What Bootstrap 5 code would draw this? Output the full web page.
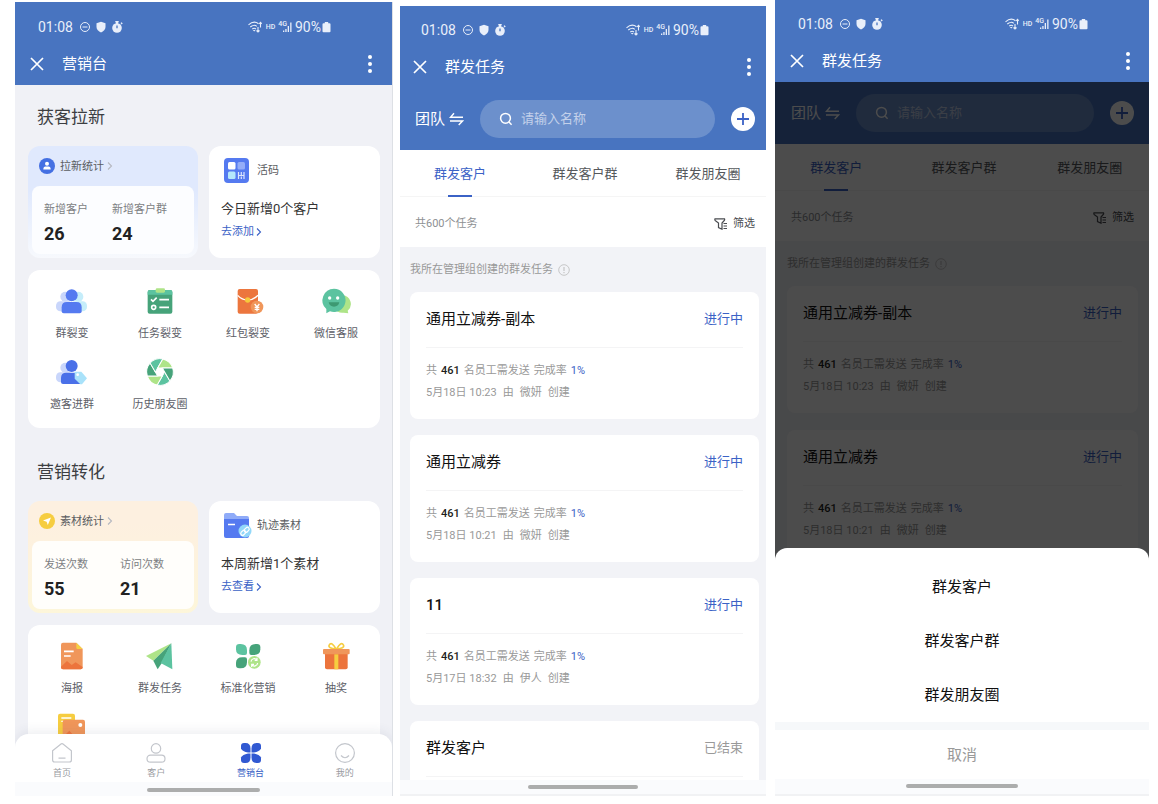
<!DOCTYPE html>
<html lang="zh-CN">
<head>
<meta charset="utf-8">
<meta name="viewport" content="width=device-width, initial-scale=1">
<title>营销台</title>
<link href="https://cdn.jsdelivr.net/npm/bootstrap@5.3.0/dist/css/bootstrap.min.css" rel="stylesheet">
<style>
  :root { --brand: #4874c0; --link: #3b62c6; --ink: #333539; --mute: #999; --page: #f0f1f6; }
  body { font-family: Roboto, "Noto Sans CJK SC", sans-serif; color: var(--ink); font-size: 11px; line-height: 16px; background: #fff; }
  button { font: inherit; }
  svg { display: block; flex: none; }
  .board { display: grid; grid-template-columns: 377fr 366fr 375fr; gap: 8px; height: 100vh; padding: 0 9px 8px 15px; }
  .phone { display: flex; flex-direction: column; position: relative; min-height: 0; min-width: 0; overflow: hidden; background: var(--page); }
  .phone-home { margin-top: 2px; box-shadow: 1px 0 #dde0e5; --pl: 15px; --pr: 20px; --top: 13px; --sl: 23px; --sr: 61px; }
  .phone-list { margin-top: 6px; --pl: 13px; --pr: 15px; --top: 12px; --sl: 21px; --sr: 57px; --rowl: 15px; --rowr: 11px; --el: 10px; --er: 7px; --gap: 16px; }
  .phone-sheet { margin-left: 1px; --pl: 15px; --pr: 19px; --top: 12px; --sl: 23px; --sr: 61px; --rowl: 16px; --rowr: 15px; --el: 12px; --er: 11px; --gap: 17px; }
  .plain { border: 0; background: none; padding: 0; color: inherit; }

  .topbar { background: var(--brand); color: #fff; padding-top: var(--top); flex: none; }
  .status { height: 24px; padding: 0 var(--sr) 0 var(--sl); font-size: 14px; line-height: 24px; color: #e9effa; }
  .status .marks { margin: 0 auto 0 6px; }
  .status .tiny { font-size: 7px; line-height: 8px; font-weight: 500; }
  .status .hd { margin: 0 3px 0 4px; }
  .status .net { margin-right: -4px; padding-bottom: 6px; }
  .status .bars { margin-right: 3px; }
  .status .cell { margin-left: 1px; }
  .titlebar { height: 42px; margin-top: 4px; padding: 0 var(--pr) 0 var(--pl); gap: 18px; }
  .titlebar h1 { font-size: 15px; line-height: 20px; font-weight: 400; }

  .searchrow { background: var(--brand); color: #fff; padding: 12px var(--rowr) 12px var(--rowl); gap: 16px; flex: none; }
  .team { font-size: 15px; line-height: 20px; }
  .searchbox { height: 38px; border-radius: 19px; background: #6c90cc; padding: 0 19px; gap: 8px; min-width: 0; }
  .searchbox input { border: 0; outline: 0; background: none; color: #fff; font-size: 13px; line-height: 20px; padding: 0; width: 100%; min-width: 0; }
  .searchbox input::placeholder { color: #c3d1ea; opacity: 1; }

  .tabs { display: grid; grid-template-columns: 120fr 130fr 116fr; background: #fff; height: 47px; border-bottom: 1px solid #f5f5f5; flex: none; }
  .tabs button { font-size: 13px; line-height: 20px; padding-top: 2px; color: #55585c; position: relative; white-space: nowrap; }
  .tabs .active { color: var(--link); }
  .tabs .active::after { content: ""; position: absolute; left: 50%; bottom: -1px; width: 24px; height: 2px; margin-left: -12px; background: var(--link); }
  .countrow { height: 50px; background: #fff; padding: 3px var(--rowr) 0 var(--rowl); color: #8e9093; flex: none; }
  .filter { color: #4a4c50; gap: 5px; }
  .hint { height: 45px; padding-left: var(--el); color: var(--mute); gap: 5px; }
  .tasks { flex: 1 1 0; min-height: 0; overflow: hidden; background: #f2f3f7; }
  .tasklist { display: flex; flex-direction: column; gap: var(--gap); padding: 0 var(--er) 0 var(--el); }
  .task { background: #fff; border-radius: 8px; padding: 0 16px 15px; flex: none; }
  .task header { height: 56px; padding-bottom: 2px; border-bottom: 1px solid #f4f4f5; margin-bottom: 12px; }
  .task h2 { font-size: 15px; line-height: 20px; font-weight: 400; color: #111; }
  .task h2.num { font-weight: 500; }
  .task .state { font-size: 13px; line-height: 20px; color: var(--link); }
  .task .state.done { color: var(--mute); }
  .task p { line-height: 22px; color: var(--mute); display: flex; gap: 4px; white-space: nowrap; }
  .task p.made { gap: 6px; }
  .task b { font-weight: 500; color: #1d1e20; }
  .task .rate { color: var(--link); }
  .homebar { height: 16px; background: #fafbfd; padding-top: 6px; flex: none; }
  .homebar i { display: block; width: 30%; height: 4px; border-radius: 2px; background: #acadad; margin: 0 auto; }
  .edge { border-bottom: 2px solid #f1f2f4; padding-top: 5px; }

  .home { flex: 1 1 0; min-height: 0; overflow: hidden; padding: 0 12px 0 13px; }
  .home > h2 { font-size: 17px; line-height: 24px; font-weight: 400; padding: 20px 9px 17px; color: #3c3e42; }
  .pair { display: grid; grid-template-columns: 170fr 171fr; gap: 11px; margin-bottom: 12px; }
  .stat { border-radius: 12px; padding: 0 4px 4px; background: linear-gradient(#e0e9fd 40%, #f7f9fd); }
  .stat.warm { background: linear-gradient(#fdf0e0 20%, #fdf6da); }
  .stat > button { height: 40px; padding: 0 7px; gap: 5px; color: #5b5d61; }
  .stat > button span { padding-top: 2px; }
  .stat .go { margin-left: -2px; color: #b5b8c0; }
  .statbox { background: #fcfdff; border-radius: 8px; padding: 16px 12px 8px; gap: 24px; color: #7d7f83; }
  .warm .statbox { background: #fffefb; gap: 32px; }
  .statbox strong { display: block; font-size: 18px; line-height: 24px; font-weight: 700; color: #222; margin-top: 4px; }
  .feature { background: #fff; border-radius: 12px; padding: 10px 12px; color: #5b5d61; }
  .feature span { padding-top: 2px; }
  .feature h3 { font-size: 13px; line-height: 20px; font-weight: 400; margin: 15px 0 4px; color: #333; }
  .feature a { color: var(--link); line-height: 18px; text-decoration: none; display: inline-flex; align-items: center; gap: 2px; }
  .apps { display: grid; grid-template-columns: repeat(4, 1fr); row-gap: 15px; background: #fff; border-radius: 12px; padding: 16px 0 15px; margin-bottom: 12px; }
  .apps button { display: flex; flex-direction: column; align-items: center; gap: 10px; color: #5d6068; white-space: nowrap; }

  .dock { position: absolute; left: 0; right: 0; bottom: 0; border-radius: 14px 14px 0 0; overflow: hidden; background: #fff; }
  .dockshade { position: absolute; left: 0; right: 0; bottom: 0; height: 62px; border-radius: 14px 14px 0 0; box-shadow: 0 -2px 12px rgba(60,70,100,.10); }
  .dock nav { display: grid; grid-template-columns: repeat(4, 1fr); padding: 9px 0 3px; }
  .dock nav a { display: flex; flex-direction: column; align-items: center; gap: 4px; font-size: 9px; line-height: 12px; color: #999b9f; text-decoration: none; }
  .dock nav a.active { color: var(--link); }
  .dock .homebar { height: 14px; }

  .stage { flex: 1 1 0; min-height: 0; position: relative; display: flex; flex-direction: column; }
  .veil { position: absolute; inset: 0; background: rgba(0,0,0,.7); }
  .sheet { position: absolute; left: 0; right: 0; bottom: 0; background: #fff; border-radius: 12px 12px 0 0; padding-top: 12px; overflow: hidden; color: #111; }
  .sheet button { display: block; width: 100%; height: 54px; font-size: 15px; line-height: 20px; }
  .sheet .cancel { height: 49px; color: var(--mute); }
  .sheet .split { height: 8px; background: #f6f8fa; }
  .sheet .homebar { height: 17px; }
</style>
</head>
<body>

<svg width="0" height="0" class="position-absolute" aria-hidden="true">
  <symbol id="st-left" viewBox="0 0 44 12">
    <g fill="none" stroke="currentColor"><circle cx="6" cy="6" r="4.500"/><path d="M3.500 6h5"/></g>
    <path fill="currentColor" d="M22 .8l4.500 1.500v3.700c0 2.600-2 4.400-4.500 5.400-2.500-1-4.500-2.800-4.500-5.400v-3.700z"/>
    <g fill="currentColor"><circle cx="38" cy="7" r="4.800"/><path d="M36.300 0h3.400v1.500h-3.400zM41.500 2l1.200-.8 1 1.200-1 1zM37 1h2v2h-2z"/></g>
    <path d="M38 7.200v-2.800" stroke="#4874c0" stroke-width="1.300"/>
  </symbol>
  <symbol id="wifi" viewBox="0 0 14 12">
    <g fill="none" stroke="currentColor" stroke-width="1.100"><path d="M.5 3.800c3.500-3 7.500-3 10-1M2.300 6c2.200-2 5-2 6.500-.6M4.300 8c1.200-1 2.500-1 3.600 0M10 6v5M8.500 9.500l1.500 1.500 1.500-1.500M12.500 6.500v-5M11.200 2.800l1.300-1.400 1.200 1.400"/></g>
    <path fill="currentColor" d="M6.200 10.600l-1.400-1.500h2.800z"/>
  </symbol>
  <symbol id="signal" viewBox="0 0 9 12"><path fill="currentColor" d="M0 9.500h1.300v1.500H0zM2.300 8h1.300v3H2.300zM4.700 5h1.300v6H4.700zM7.200 1.500h1.300v9.500H7.200z"/></symbol>
  <symbol id="battery" viewBox="0 0 9 12"><path fill="currentColor" d="M2.800 1h3.400v1.200h1.300q1 0 1 1v7q0 1-1 1h-6q-1 0-1-1v-7q0-1 1-1h1.300z"/></symbol>
  <symbol id="close" viewBox="0 0 14 14"><path d="M1 1l12 12M13 1l-12 12" stroke="currentColor" stroke-width="1.700" fill="none"/></symbol>
  <symbol id="dots" viewBox="0 0 4 18"><g fill="currentColor"><circle cx="2" cy="2" r="2"/><circle cx="2" cy="9" r="2"/><circle cx="2" cy="16" r="2"/></g></symbol>
  <symbol id="swap" viewBox="0 0 15 14"><path d="M5 1.300L1.500 5.300h12.500M1 9h12.500l-3.800 4" stroke="currentColor" stroke-width="1.400" fill="none"/></symbol>
  <symbol id="find" viewBox="0 0 14 14"><g stroke="currentColor" stroke-width="1.500" fill="none"><circle cx="6.500" cy="6.300" r="4.900"/><path d="M10 10l2.600 2.800"/></g></symbol>
  <symbol id="plus" viewBox="0 0 24 24"><circle cx="12" cy="12" r="12" fill="#fff"/><path d="M12 6v12M6 12h12" stroke="#3b62c6" stroke-width="1.800"/></symbol>
  <symbol id="funnel" viewBox="0 0 14 12"><path d="M1 .8h9.500q.5 1.200-.5 2L8 5v6.200L4.500 9.500V5L1.500 2.800Q.5 2 1 .8zM9.500 5.500h3.500M9.500 8h3.500M9.500 10.500h3.500" stroke="currentColor" stroke-width="1.200" fill="none"/></symbol>
  <symbol id="note" viewBox="0 0 12 12"><circle cx="6" cy="6" r="5.300" fill="none" stroke="#bbb" stroke-width=".8"/><path d="M6 3v4M6 8v1.200" stroke="#bbb"/></symbol>
  <symbol id="next" viewBox="0 0 6 10"><path d="M1 1.500l3.500 3.500-3.500 3.500" stroke="currentColor" stroke-width="1.100" fill="none"/></symbol>
</svg>

<main class="board">

  <!-- 营销台首页 -->
  <section class="phone phone-home">
    <div class="topbar">
      <div class="status d-flex align-items-center">
        <span>01:08</span><svg class="marks" width="44" height="12"><use href="#st-left"/></svg>
        <svg width="14" height="12"><use href="#wifi"/></svg><span class="tiny hd">HD</span><span class="tiny net">4G</span><svg class="bars" width="9" height="12"><use href="#signal"/></svg><span>90%</span><svg class="cell" width="9" height="12"><use href="#battery"/></svg>
      </div>
      <div class="titlebar d-flex align-items-center">
        <button class="plain" aria-label="关闭"><svg width="14" height="14"><use href="#close"/></svg></button>
        <h1 class="m-0 me-auto">营销台</h1>
        <button class="plain" aria-label="更多"><svg width="4" height="18"><use href="#dots"/></svg></button>
      </div>
    </div>

    <div class="home">
      <h2 class="m-0">获客拉新</h2>
      <div class="pair">
        <div class="stat">
          <button class="plain d-flex align-items-center">
            <svg width="16" height="16" viewBox="0 0 16 16"><circle cx="8" cy="8" r="8" fill="#4470e2"/><circle cx="8" cy="5.800" r="2" fill="#fff"/><path d="M4.300 11.500q0-3 2.200-3h3q2.200 0 2.200 3z" fill="#fff"/></svg>
            <span>拉新统计</span><svg class="go" width="6" height="10"><use href="#next"/></svg>
          </button>
          <div class="statbox d-flex"><div>新增客户<strong>26</strong></div><div>新增客户群<strong>24</strong></div></div>
        </div>
        <div class="feature">
          <div class="d-flex align-items-center gap-2">
            <svg width="28" height="28" viewBox="0 0 28 28"><rect x="3" y="2" width="25" height="25" rx="4" fill="#557af0"/><rect x="7" y="6" width="7.500" height="7.500" rx="1.500" fill="#fff"/><rect x="16.500" y="6" width="7.500" height="7.500" rx="1.500" fill="#94adf8"/><rect x="7" y="15.500" width="7.500" height="7.500" rx="1.500" fill="#b5e8fb"/><path d="M17.500 16v7M20.300 16v3M20.300 20.500v2.500M23 16v7M18 19.500h5" stroke="#dce5fd" stroke-width="1.200"/></svg>
            <span>活码</span>
          </div>
          <h3>今日新增0个客户</h3>
          <a href="#">去添加<svg width="6" height="10"><use href="#next"/></svg></a>
        </div>
      </div>

      <div class="apps">
        <button class="plain"><svg width="32" height="30" viewBox="0 0 96 90"><circle cx="28" cy="32" r="15" fill="#c9d6fb"/><rect y="46" width="50" height="30" rx="13" fill="#c9d6fb"/><circle cx="67" cy="32" r="15" fill="#c5edfa"/><rect x="44" y="46" width="49" height="30" rx="13" fill="#c5edfa"/><circle cx="47" cy="28" r="18" fill="#557af0"/><path d="M17 76V64q0-16 16-16h28q16 0 16 16v12q0 6-6 6H23q-6 0-6-6z" fill="#557af0"/></svg><span>群裂变</span></button>
        <button class="plain"><svg width="32" height="30" viewBox="0 0 96 90"><rect x="11" y="12" width="74" height="71" rx="6" fill="#46a37a"/><path d="M11 26v-8q0-6 6-6h62q6 0 6 6v8z" fill="#5cc3a0"/><rect x="35" y="7" width="28" height="13" rx="4" fill="#aee488"/><g fill="none" stroke="#fff" stroke-width="5"><path d="M21 40l6 6 11-11M46 41h29M46 64h29"/><circle cx="29" cy="64" r="6"/></g></svg><span>任务裂变</span></button>
        <button class="plain"><svg width="32" height="30" viewBox="0 0 96 90"><rect x="17" y="9" width="61" height="74" rx="6" fill="#ec763e"/><path d="M17 28q13 14 30 14t31-14" fill="none" stroke="#fff" stroke-width="4"/><circle cx="47" cy="42" r="8" fill="#f6c93c"/><circle cx="75" cy="63" r="19" fill="#f0965a"/><path d="M68 54l7 9 7-9M75 62v14M68 64h14M68 70h14" stroke="#fff" stroke-width="4" fill="none"/></svg><span>红包裂变</span></button>
        <button class="plain"><svg width="32" height="30" viewBox="0 0 96 90"><path d="M68 28a26 26 0 0 1 15 46l2 8-14-2q-18 2-26-10z" fill="#aee488"/><path d="M42 8a35 35 0 1 1-12 68l-11 6 0-13A35 35 0 0 1 42 8z" fill="#5cc3a0"/><circle cx="29" cy="36" r="5" fill="#fff"/><circle cx="53" cy="36" r="5" fill="#fff"/><path d="M26 49h32q-3 13-16 13t-16-13z" fill="#3d9972"/></svg><span>微信客服</span></button>
        <button class="plain"><svg width="32" height="30" viewBox="0 0 96 90"><circle cx="28" cy="32" r="15" fill="#c9d6fb"/><rect y="46" width="50" height="30" rx="13" fill="#c9d6fb"/><circle cx="47" cy="27" r="18" fill="#4a70e8"/><path d="M15 75V63q0-16 16-16h30q14 0 14 16v18H21q-6 0-6-6z" fill="#4a70e8"/><path d="M56 44h20l17 20-15 18h-5L56 65z" fill="#a9e2fa"/><circle cx="65" cy="53" r="4" fill="#fff"/></svg><span>邀客进群</span></button>
        <button class="plain"><svg width="32" height="30" viewBox="0 0 96 90"><g transform="translate(48 45)" stroke="#fff" stroke-width="3"><path d="M14 0L29.600 26.900A40 40 0 0 1-8.500 39.100z" fill="#5cc3a0"/><path d="M14 0L29.600 26.900A40 40 0 0 1-8.500 39.100z" transform="rotate(60)" fill="#aee488"/><path d="M14 0L29.600 26.900A40 40 0 0 1-8.500 39.100z" transform="rotate(120)" fill="#46a37a"/><path d="M14 0L29.600 26.900A40 40 0 0 1-8.500 39.100z" transform="rotate(180)" fill="#5cc3a0"/><path d="M14 0L29.600 26.900A40 40 0 0 1-8.500 39.100z" transform="rotate(240)" fill="#aee488"/><path d="M14 0L29.600 26.900A40 40 0 0 1-8.500 39.100z" transform="rotate(300)" fill="#46a37a"/></g></svg><span>历史朋友圈</span></button>
      </div>

      <h2 class="m-0">营销转化</h2>
      <div class="pair">
        <div class="stat warm">
          <button class="plain d-flex align-items-center">
            <svg width="16" height="16" viewBox="0 0 16 16"><circle cx="8" cy="8" r="8" fill="#f6cd40"/><path d="M12 4.500L8.800 12 7.600 8.700 4 7.500z" fill="#fff"/></svg>
            <span>素材统计</span><svg class="go" width="6" height="10"><use href="#next"/></svg>
          </button>
          <div class="statbox d-flex"><div>发送次数<strong>55</strong></div><div>访问次数<strong>21</strong></div></div>
        </div>
        <div class="feature">
          <div class="d-flex align-items-center gap-2">
            <svg width="28" height="28" viewBox="0 0 28 28" overflow="visible"><g transform="translate(1 0)"><path d="M2 4q0-2 2-2h8l3 3h10q2 0 2 2v8H2z" fill="#8fabf8"/><path d="M2 8h25v17q0 2-2 2H4q-2 0-2-2z" fill="#557af0"/><path d="M6 13.500h7" stroke="#fff" stroke-width="1.500"/><circle cx="23" cy="20" r="6.500" fill="#93d8f9"/><g fill="none" stroke="#fff" stroke-width="1.200"><rect x="18.500" y="20" width="5.500" height="3.600" rx="1.800" transform="rotate(-45 21.200 21.800)"/><rect x="22" y="17" width="5.500" height="3.600" rx="1.800" transform="rotate(-45 24.700 18.800)"/></g></g></svg>
            <span>轨迹素材</span>
          </div>
          <h3>本周新增1个素材</h3>
          <a href="#">去查看<svg width="6" height="10"><use href="#next"/></svg></a>
        </div>
      </div>

      <div class="apps">
        <button class="plain"><svg width="32" height="30" viewBox="0 0 96 90"><path d="M15 11q0-6 6-6h40l19 19v55q0 6-6 6H21q-6 0-6-6z" fill="#f0965a"/><path d="M61 5l19 19H65q-4 0-4-4z" fill="#f6d044"/><path d="M15 77l18-17 14 12 12-8 21 14v1q0 6-6 6H21q-6 0-6-6z" fill="#ec743c"/><path d="M24 31h29M24 45h20" stroke="#fff" stroke-width="5"/></svg><span>海报</span></button>
        <button class="plain"><svg width="32" height="30" viewBox="0 0 96 90"><path d="M6 45L82 7 28 59z" fill="#aee488"/><path d="M82 7L28 59 41 85l12-18z" fill="#46a37a"/><path d="M82 7L50 66 85 85z" fill="#5cc3a0"/></svg><span>群发任务</span></button>
        <button class="plain"><svg width="32" height="30" viewBox="0 0 96 90"><path d="M22 9h4q19 0 19 19v8q0 6-6 6h-8q-19 0-19-17v-6q0-10 10-10z" fill="#5cc3a0"/><path d="M75 9h-4Q52 9 52 28v8q0 6 6 6h8q19 0 19-17v-6q0-10-10-10z" fill="#46a37a"/><path d="M22 82h4q19 0 19-19v-8q0-6-6-6h-8q-19 0-19 17v6q0 10 10 10z" fill="#46a37a"/><circle cx="67" cy="64" r="19" fill="#aee488"/><path d="M57 62a10 10 0 0 1 18-5M77 66a10 10 0 0 1-18 5M75 50v8h-7M59 78v-8h7" fill="none" stroke="#fff" stroke-width="3.500"/></svg><span>标准化营销</span></button>
        <button class="plain"><svg width="32" height="30" viewBox="0 0 96 90"><g fill="none" stroke="#f6cd40" stroke-width="5"><path d="M48 24Q24 22 27 13q8-14 21 11z"/><path d="M50 24q24-2 21-11-8-14-21 11z"/></g><path d="M15 38h68v41q0 6-6 6H21q-6 0-6-6z" fill="#ec743c"/><rect x="9" y="24" width="80" height="16" rx="3" fill="#f0965a"/><path d="M43 40h12v45H43z" fill="#f6cd40"/></svg><span>抽奖</span></button>
        <button class="plain"><svg width="32" height="30" viewBox="0 0 96 90"><rect x="6" y="5" width="51" height="70" rx="6" fill="#f6cd40"/><path d="M16 18h30M16 28h12" stroke="#fff" stroke-width="4"/><rect x="20" y="23" width="67" height="60" rx="6" fill="#f0965a"/><circle cx="73" cy="39" r="6" fill="#fff"/><path d="M20 76l20-20 22 24v3H26q-6 0-6-6z" fill="#ec743c"/></svg></button>
      </div>
    </div>

    <div class="dockshade"></div>
    <div class="dock">
      <nav>
        <a href="#"><svg width="22" height="20" viewBox="0 0 22 20" fill="none" stroke="#c3c6cc" stroke-width="1.200"><path d="M1.600 7.800L10 1q1-.8 2 0l8.400 6.800v9.200q0 2-2 2H3.600q-2 0-2-2z"/><path d="M7.500 15.200h7"/></svg>首页</a>
        <a href="#"><svg width="22" height="20" viewBox="0 0 22 20" fill="none" stroke="#c3c6cc" stroke-width="1.200"><circle cx="11" cy="5.400" r="4.700"/><rect x="2" y="12.200" width="18" height="7" rx="3.500"/></svg>客户</a>
        <a href="#" class="active"><svg width="22" height="20" viewBox="0 0 22 20" fill="#3159d2"><path d="M4 0h1.500q5 0 5 5.500v4H8q-5.500-1-7-4V3q0-3 3-3z"/><path d="M18 0h-1.500q-5 0-5 5.500v4H14q5.500-1 7-4V3q0-3-3-3z"/><path d="M4 20h1.500q5 0 5-5.500v-4H8q-5.500 1-7 4V17q0 3 3 3z"/><path d="M18 20h-1.500q-5 0-5-5.500v-4H14q5.500 1 7 4V17q0 3-3 3z"/></svg>营销台</a>
        <a href="#"><svg width="22" height="20" viewBox="0 0 22 20" fill="none" stroke="#c3c6cc" stroke-width="1.200"><circle cx="11" cy="10" r="9.400"/><path d="M7 12.500q4 4.500 8 0"/></svg>我的</a>
      </nav>
      <div class="homebar"><i></i></div>
    </div>
  </section>

  <!-- 群发任务列表 -->
  <section class="phone phone-list">
    <div class="topbar">
      <div class="status d-flex align-items-center">
        <span>01:08</span><svg class="marks" width="44" height="12"><use href="#st-left"/></svg>
        <svg width="14" height="12"><use href="#wifi"/></svg><span class="tiny hd">HD</span><span class="tiny net">4G</span><svg class="bars" width="9" height="12"><use href="#signal"/></svg><span>90%</span><svg class="cell" width="9" height="12"><use href="#battery"/></svg>
      </div>
      <div class="titlebar d-flex align-items-center">
        <button class="plain" aria-label="关闭"><svg width="14" height="14"><use href="#close"/></svg></button>
        <h1 class="m-0 me-auto">群发任务</h1>
        <button class="plain" aria-label="更多"><svg width="4" height="18"><use href="#dots"/></svg></button>
      </div>
    </div>
    <div class="searchrow d-flex align-items-center">
      <button class="plain team d-flex align-items-center gap-1">团队<svg width="15" height="14"><use href="#swap"/></svg></button>
      <label class="searchbox d-flex align-items-center flex-fill"><svg width="14" height="14"><use href="#find"/></svg><input type="text" placeholder="请输入名称" aria-label="请输入名称"></label>
      <button class="plain" aria-label="新建"><svg width="24" height="24"><use href="#plus"/></svg></button>
    </div>
    <div class="tabs"><button class="plain active">群发客户</button><button class="plain">群发客户群</button><button class="plain">群发朋友圈</button></div>
    <div class="countrow d-flex align-items-center justify-content-between"><span>共600个任务</span><button class="plain filter d-flex align-items-center"><svg width="14" height="12"><use href="#funnel"/></svg>筛选</button></div>
    <div class="tasks">
      <div class="hint d-flex align-items-center">我所在管理组创建的群发任务<svg width="12" height="12"><use href="#note"/></svg></div>
      <div class="tasklist">
        <article class="task">
          <header class="d-flex align-items-center justify-content-between"><h2 class="m-0">通用立减券-副本</h2><span class="state">进行中</span></header>
          <p class="m-0"><span>共</span><b>461</b><span>名员工需发送</span><span>完成率</span><span class="rate">1%</span></p>
          <p class="m-0 made"><span>5月18日 10:23</span><span>由</span><span>微妍</span><span>创建</span></p>
        </article>
        <article class="task">
          <header class="d-flex align-items-center justify-content-between"><h2 class="m-0">通用立减券</h2><span class="state">进行中</span></header>
          <p class="m-0"><span>共</span><b>461</b><span>名员工需发送</span><span>完成率</span><span class="rate">1%</span></p>
          <p class="m-0 made"><span>5月18日 10:21</span><span>由</span><span>微妍</span><span>创建</span></p>
        </article>
        <article class="task">
          <header class="d-flex align-items-center justify-content-between"><h2 class="m-0 num">11</h2><span class="state">进行中</span></header>
          <p class="m-0"><span>共</span><b>461</b><span>名员工需发送</span><span>完成率</span><span class="rate">1%</span></p>
          <p class="m-0 made"><span>5月17日 18:32</span><span>由</span><span>伊人</span><span>创建</span></p>
        </article>
        <article class="task">
          <header class="d-flex align-items-center justify-content-between"><h2 class="m-0">群发客户</h2><span class="state done">已结束</span></header>
        </article>
      </div>
    </div>
    <div class="homebar edge"><i></i></div>
  </section>

  <!-- 新建任务弹层 -->
  <section class="phone phone-sheet">
    <div class="topbar">
      <div class="status d-flex align-items-center">
        <span>01:08</span><svg class="marks" width="44" height="12"><use href="#st-left"/></svg>
        <svg width="14" height="12"><use href="#wifi"/></svg><span class="tiny hd">HD</span><span class="tiny net">4G</span><svg class="bars" width="9" height="12"><use href="#signal"/></svg><span>90%</span><svg class="cell" width="9" height="12"><use href="#battery"/></svg>
      </div>
      <div class="titlebar d-flex align-items-center">
        <button class="plain" aria-label="关闭"><svg width="14" height="14"><use href="#close"/></svg></button>
        <h1 class="m-0 me-auto">群发任务</h1>
        <button class="plain" aria-label="更多"><svg width="4" height="18"><use href="#dots"/></svg></button>
      </div>
    </div>
    <div class="stage">
      <div class="searchrow d-flex align-items-center">
        <button class="plain team d-flex align-items-center gap-1">团队<svg width="15" height="14"><use href="#swap"/></svg></button>
        <label class="searchbox d-flex align-items-center flex-fill"><svg width="14" height="14"><use href="#find"/></svg><input type="text" placeholder="请输入名称" aria-label="请输入名称"></label>
        <button class="plain" aria-label="新建"><svg width="24" height="24"><use href="#plus"/></svg></button>
      </div>
      <div class="tabs"><button class="plain active">群发客户</button><button class="plain">群发客户群</button><button class="plain">群发朋友圈</button></div>
      <div class="countrow d-flex align-items-center justify-content-between"><span>共600个任务</span><button class="plain filter d-flex align-items-center"><svg width="14" height="12"><use href="#funnel"/></svg>筛选</button></div>
      <div class="tasks">
        <div class="hint d-flex align-items-center">我所在管理组创建的群发任务<svg width="12" height="12"><use href="#note"/></svg></div>
        <div class="tasklist">
          <article class="task">
            <header class="d-flex align-items-center justify-content-between"><h2 class="m-0">通用立减券-副本</h2><span class="state">进行中</span></header>
            <p class="m-0"><span>共</span><b>461</b><span>名员工需发送</span><span>完成率</span><span class="rate">1%</span></p>
            <p class="m-0 made"><span>5月18日 10:23</span><span>由</span><span>微妍</span><span>创建</span></p>
          </article>
          <article class="task">
            <header class="d-flex align-items-center justify-content-between"><h2 class="m-0">通用立减券</h2><span class="state">进行中</span></header>
            <p class="m-0"><span>共</span><b>461</b><span>名员工需发送</span><span>完成率</span><span class="rate">1%</span></p>
            <p class="m-0 made"><span>5月18日 10:21</span><span>由</span><span>微妍</span><span>创建</span></p>
          </article>
        </div>
      </div>
      <div class="veil"></div>
      <div class="sheet">
        <button class="plain">群发客户</button>
        <button class="plain">群发客户群</button>
        <button class="plain">群发朋友圈</button>
        <div class="split"></div>
        <button class="plain cancel">取消</button>
        <div class="homebar edge"><i></i></div>
      </div>
    </div>
  </section>
</main>

<script src="https://cdn.jsdelivr.net/npm/bootstrap@5.3.0/dist/js/bootstrap.bundle.min.js"></script>
</body>
</html>
